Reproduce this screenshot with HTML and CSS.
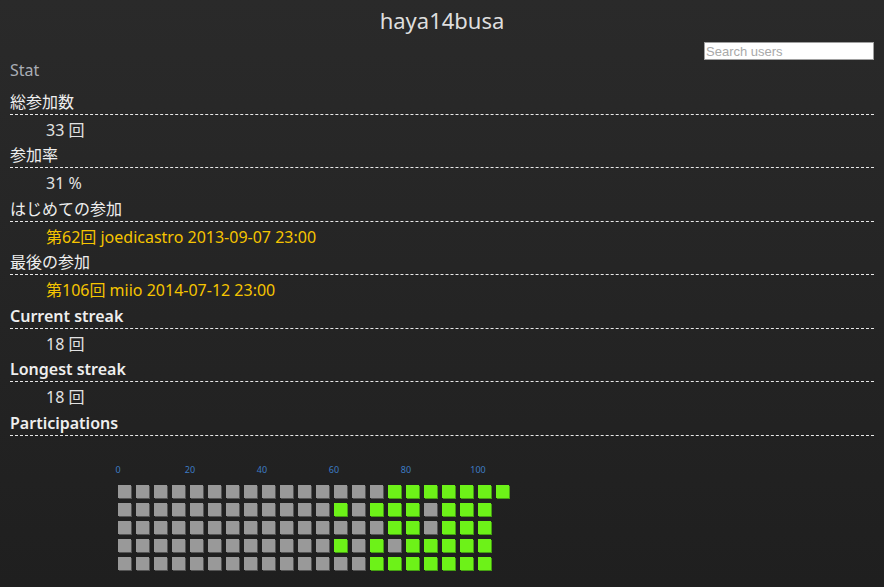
FILE: index.html
```html
<!DOCTYPE html>
<html lang="ja">
<head>
<meta charset="utf-8">
<title>haya14busa</title>
<link rel="stylesheet" href="styles.css">
</head>
<body>
<div class="page">
  <h1 class="title">haya14busa</h1>
  <div class="search-row">
    <input class="search" type="text" placeholder="Search users">
  </div>
  <h2 class="section">Stat</h2>
  <dl class="stats">
    <dt class="label label-ja">総参加数</dt>
    <dd class="value">33 回</dd>
    <dt class="label label-ja">参加率</dt>
    <dd class="value">31 %</dd>
    <dt class="label label-ja">はじめての参加</dt>
    <dd class="value"><a class="event" href="#">第62回 joedicastro 2013-09-07 23:00</a></dd>
    <dt class="label label-ja">最後の参加</dt>
    <dd class="value"><a class="event" href="#">第106回 miio 2014-07-12 23:00</a></dd>
    <dt class="label">Current streak</dt>
    <dd class="value">18 回</dd>
    <dt class="label">Longest streak</dt>
    <dd class="value">18 回</dd>
    <dt class="label">Participations</dt>
  </dl>
  <svg class="chart" id="chart" width="520" height="140" viewBox="0 0 520 140"></svg>
</div>
<script src="chart.js"></script>
</body>
</html>
```

FILE: styles.css
```css
html, body {
  margin: 0;
  padding: 0;
  min-height: 100%;
}
body {
  background: linear-gradient(to bottom, #2a2a2a 0%, #1f1f1f 100%);
  background-attachment: fixed;
  color: #e6e6e6;
  font-family: "Noto Sans", "Noto Sans CJK JP", sans-serif;
  font-size: 16px;
  min-height: 587px;
}
.page {
  padding: 0 10px;
}
.title {
  margin: 0;
  text-align: center;
  font-size: 22px;
  font-weight: normal;
  line-height: 41px;
  color: #dedede;
}
.search-row {
  display: flex;
  justify-content: flex-end;
  margin-top: 1px;
  height: 18px;
}
.search {
  box-sizing: border-box;
  width: 170px;
  height: 18px;
  margin: 0;
  padding: 0 1px;
  border: 1px solid #a0a0a0;
  background: #fff;
  font-family: "Liberation Sans", Arial, sans-serif;
  font-size: 13px;
  color: #333;
  outline: none;
}
.search::placeholder {
  color: #a9a9a9;
}
.section {
  margin: 0;
  font-size: 16px;
  font-weight: normal;
  line-height: 20px;
  color: #a9aeb6;
}
.stats {
  margin: 11px 0 0 0;
}
.label {
  margin: 0;
  line-height: 23px;
  font-weight: 600;
  color: #eeeeee;
  border-bottom: 1px dashed #e8e8e8;
}
.label-ja {
  font-weight: normal;
}
.value {
  margin: 0 0 0 36px;
  padding-top: 2px;
  line-height: 27.45px;
  color: #e2e2e2;
}
.event {
  color: #f5c400;
  text-decoration: none;
}
.chart {
  display: block;
}
.axis-label {
  font-family: "Noto Sans", sans-serif;
  font-size: 9px;
  fill: #3d7cc4;
}
```

FILE: chart.js
```js
(function () {
  var svg = document.getElementById('chart');
  var ns = 'http://www.w3.org/2000/svg';
  var set = {};
  [61,63,71,73,74,75,76,77,79,80,81,82,83,84,85,88,89,90,91,92,93,94,95,96,97,98,99,100,101,102,103,104,105].forEach(function (i) { set[i] = true; });
  var total = 106, x0 = 108, y0 = 49, pitch = 18;
  for (var l = 0; l <= 100; l += 20) {
    var t = document.createElementNS(ns, 'text');
    t.setAttribute('x', x0 + (l / 5) * pitch);
    t.setAttribute('y', 37);
    t.setAttribute('text-anchor', 'middle');
    t.setAttribute('class', 'axis-label');
    t.textContent = l;
    svg.appendChild(t);
  }
  for (var i = 0; i < total; i++) {
    var col = Math.floor(i / 5), row = i % 5;
    var x = x0 + col * pitch, y = y0 + row * pitch;
    var on = !!set[i];
    var sh = document.createElementNS(ns, 'rect');
    sh.setAttribute('x', x + 1); sh.setAttribute('y', y + 1);
    sh.setAttribute('width', 13); sh.setAttribute('height', 13);
    sh.setAttribute('fill', on ? '#45a012' : '#555555');
    svg.appendChild(sh);
    var r = document.createElementNS(ns, 'rect');
    r.setAttribute('x', x); r.setAttribute('y', y);
    r.setAttribute('width', 13); r.setAttribute('height', 13);
    r.setAttribute('fill', on ? '#6df218' : '#999999');
    svg.appendChild(r);
  }
})();
```
